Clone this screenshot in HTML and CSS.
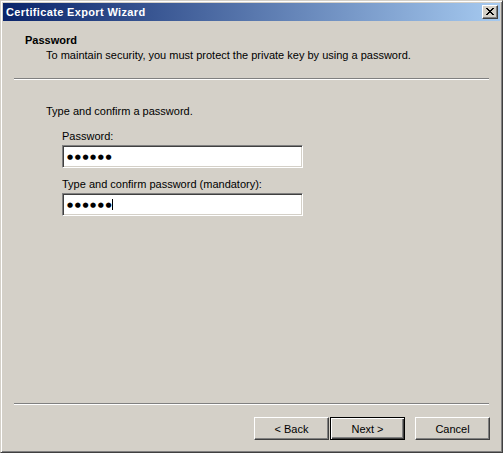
FILE: index.html
```html
<!DOCTYPE html>
<html>
<head>
<meta charset="utf-8">
<title>Certificate Export Wizard</title>
<link rel="stylesheet" href="styles.css">
</head>
<body>
<div class="window">
  <div class="titlebar">
    <span class="title">Certificate Export Wizard</span>
    <span class="close">
      <svg width="8" height="7" viewBox="0 0 8 7"><path d="M0 0h2v1h1v1h2V1h1V0h2v1H7v1H6v1H5v1h1v1h1v1h1v1H6V6H5V5H3v1H2v1H0V6h1V5h1V4h1V3H2V2H1V1H0z" fill="#000"/></svg>
    </span>
  </div>
  <div class="content">
    <div class="header">
      <div class="header-title">Password</div>
      <div class="header-sub">To maintain security, you must protect the private key by using a password.</div>
    </div>
    <div class="sep"></div>
    <div class="body">
      <div class="intro">Type and confirm a password.</div>
      <div class="group">
        <div class="label">Password:</div>
        <div class="field"><span class="mask">●●●●●●</span></div>
        <div class="label label2">Type and confirm password (mandatory):</div>
        <div class="field"><span class="mask">●●●●●●</span><span class="caret"></span></div>
      </div>
    </div>
    <div class="sep"></div>
    <div class="buttons">
      <button class="btn back">&lt; Back</button>
      <button class="btn default">Next &gt;</button>
      <button class="btn cancel">Cancel</button>
    </div>
  </div>
</div>
</body>
</html>
```
FILE: styles.css
```css
html, body {
  margin: 0;
  padding: 0;
  background: #d4d0c8;
}
.window {
  width: 503px;
  height: 453px;
  box-sizing: border-box;
  background: #d4d0c8;
  border-top: 1px solid #d4d0c8;
  border-left: 1px solid #d4d0c8;
  border-right: 1px solid #404040;
  border-bottom: 1px solid #404040;
  box-shadow: inset 1px 1px #ffffff, inset -1px -1px #808080;
  padding: 2px;
  display: flex;
  flex-direction: column;
  font-family: "Liberation Sans", Arial, sans-serif;
  font-size: 11px;
  color: #000;
}
.titlebar {
  height: 18px;
  flex: none;
  background: linear-gradient(to right, #0a246a, #a6caf0);
  display: flex;
  align-items: center;
  justify-content: space-between;
  padding: 0 2px 0 3px;
}
.title {
  color: #fff;
  font-weight: bold;
  line-height: 13px;
  letter-spacing: 0.35px;
}
.close {
  width: 16px;
  height: 14px;
  box-sizing: border-box;
  background: #d4d0c8;
  border-top: 1px solid #fff;
  border-left: 1px solid #fff;
  border-right: 1px solid #404040;
  border-bottom: 1px solid #404040;
  box-shadow: inset -1px -1px #808080;
  display: flex;
  align-items: center;
  justify-content: center;
  padding: 0 1px 1px 0;
}
.close svg { display: block; }
.content {
  flex: 1;
  display: flex;
  flex-direction: column;
}
.header {
  padding: 13px 0 0 22px;
  line-height: 13px;
}
.header-title { font-weight: bold; }
.header-sub { margin-top: 2px; padding-left: 21px; }
.sep {
  margin: 16px 11px 0 11px;
  border-top: 1px solid #808080;
  border-bottom: 1px solid #fff;
  height: 0;
}
.body {
  flex: 1;
  padding: 25px 0 0 43px;
  line-height: 13px;
}
.group { padding-left: 16px; margin-top: 12px; }
.label2 { margin-top: 10px; }
.field {
  margin-top: 2px;
  width: 241px;
  height: 23px;
  box-sizing: border-box;
  background: #fff;
  border-top: 1px solid #808080;
  border-left: 1px solid #808080;
  border-right: 1px solid #fff;
  border-bottom: 1px solid #fff;
  box-shadow: inset 1px 1px #404040, inset -1px -1px #d4d0c8;
  display: flex;
  align-items: center;
  padding-left: 4px;
}
.mask {
  font-family: "DejaVu Sans", sans-serif;
  font-size: 7px;
  letter-spacing: 1.6px;
  line-height: 10px;
}
.caret {
  width: 1px;
  height: 11px;
  background: #000;
  margin-left: -1px;
}
.buttons {
  display: flex;
  justify-content: flex-end;
  padding: 12px 10px 10px 0;
}
.btn {
  width: 75px;
  height: 23px;
  box-sizing: border-box;
  margin: 0;
  padding: 0;
  font: inherit;
  color: #000;
  background: #d4d0c8;
  border-top: 1px solid #fff;
  border-left: 1px solid #fff;
  border-right: 1px solid #404040;
  border-bottom: 1px solid #404040;
  box-shadow: inset -1px -1px #808080;
  border-radius: 0;
}
.btn.back { margin-right: 1px; }
.btn.default {
  border: 1px solid #000;
  box-shadow: inset 1px 1px #fff, inset -1px -1px #404040, inset -2px -2px #808080;
}
.btn.cancel { margin-left: 10px; }
```
